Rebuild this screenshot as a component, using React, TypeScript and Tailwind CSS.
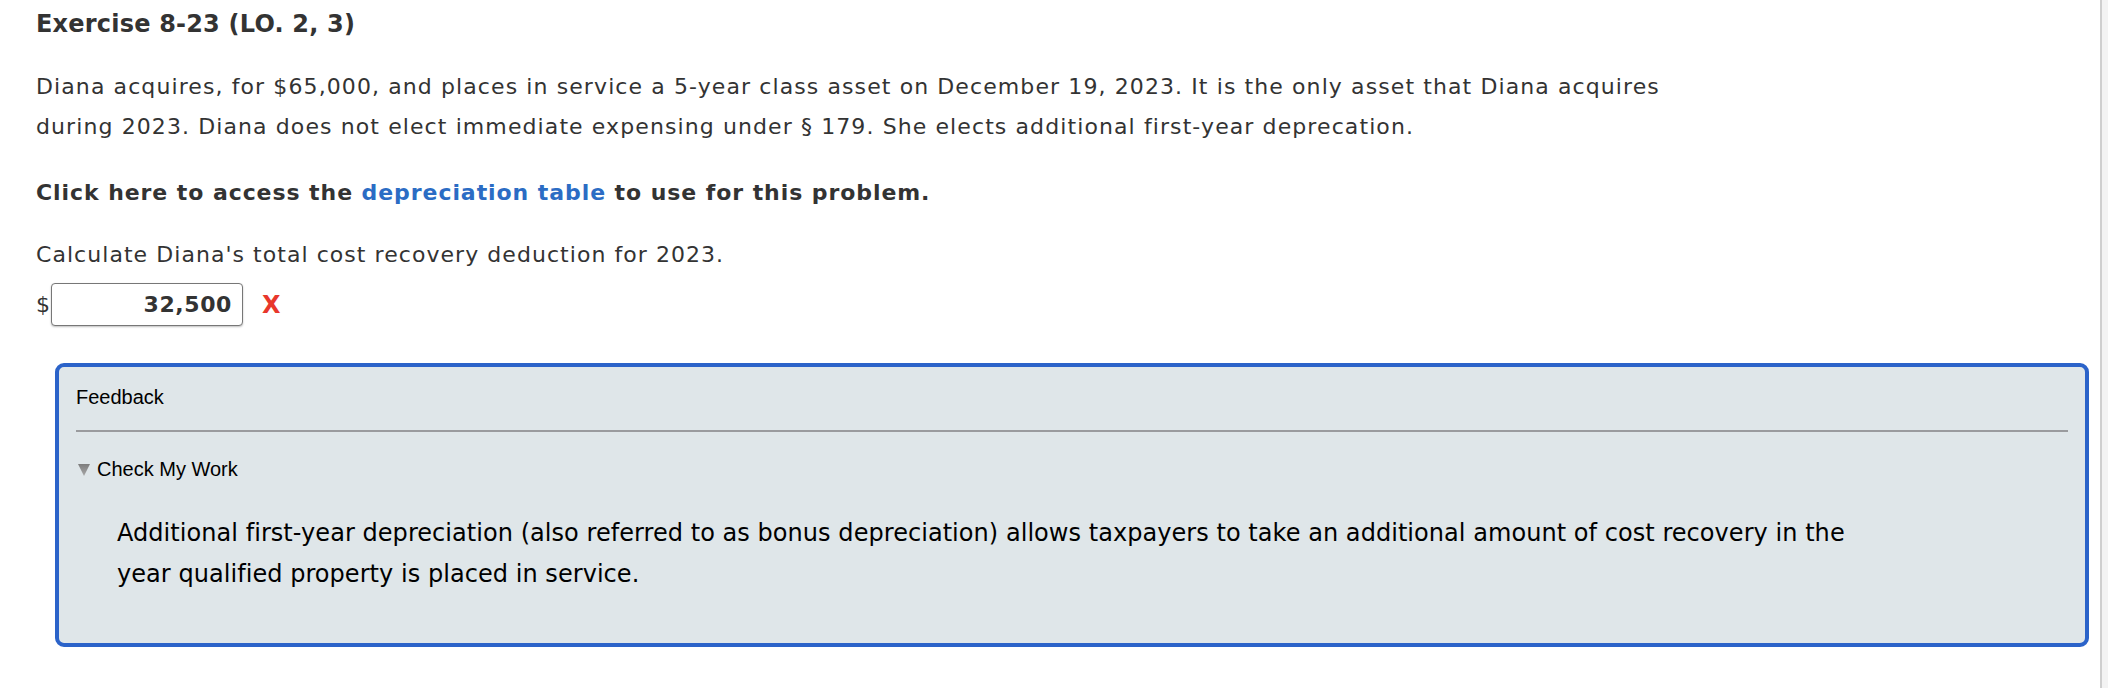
import React from "react";

const verdana = "font-['DejaVu_Sans',Verdana,sans-serif]";

export default function App() {
  return (
    <div className="flex min-h-screen w-full bg-white">
      <div className="flex-1 min-w-0 pr-[11px]">
        <div className={`${verdana} text-[#333333] pl-[36px] pt-[9px]`}>
          <h1 className="text-[24px] leading-[30px] font-bold tracking-[0.2px] whitespace-nowrap">
            Exercise 8-23 (LO. 2, 3)
          </h1>
          <p className="mt-[28px] text-[22px] leading-[40px] tracking-[1.1px] whitespace-nowrap">
            Diana acquires, for $65,000, and places in service a 5-year class asset on December 19, 2023. It is the only asset that Diana acquires
            <br />
            during 2023. Diana does not elect immediate expensing under § 179. She elects additional first-year deprecation.
          </p>
          <p className="mt-[26px] text-[22px] leading-[40px] font-bold tracking-[0.93px] whitespace-nowrap">
            Click here to access the{" "}
            <a className="text-[#2b6cc4]" href="#">
              depreciation table
            </a>{" "}
            to use for this problem.
          </p>
          <p className="mt-[22px] text-[22px] leading-[40px] tracking-[1.05px] whitespace-nowrap">
            Calculate Diana's total cost recovery deduction for 2023.
          </p>
          <div className="mt-[8px] flex items-center">
            <span className="text-[22px] leading-[43px]">$</span>
            <div className="ml-[1px] flex h-[43px] w-[192px] items-center justify-end rounded-[4px] border-[1.5px] border-[#777777] bg-white pr-[10px] shadow-[0_1px_2px_rgba(0,0,0,0.25)]">
              <span className="text-[22px] font-bold tracking-[0.6px] text-[#333333]">32,500</span>
            </div>
            <span className="ml-[19px] text-[24px] font-bold text-[#e8372c]">X</span>
          </div>
        </div>

        <div className="ml-[55px] mt-[37px] rounded-[9px] border-[4px] border-[#2b63c9] bg-[#dfe6e9] px-[17px] pt-[18px] pb-[48px] text-black">
          <div className="font-['Liberation_Sans',Arial,sans-serif] text-[20px] leading-[24px]">
            Feedback
          </div>
          <div className="mt-[21px] h-[2px] bg-[#9a9b9e]" />
          <div className="mt-[25px] flex items-center font-['Liberation_Sans',Arial,sans-serif] text-[20px] leading-[24px]">
            <svg width="12" height="12" viewBox="0 0 12 12" className="ml-[2px] mr-[7px] mt-[1px]">
              <defs>
                <linearGradient id="tri" x1="0" y1="0" x2="0" y2="1">
                  <stop offset="0" stopColor="#7d7d7d" />
                  <stop offset="1" stopColor="#a8a8a8" />
                </linearGradient>
              </defs>
              <polygon points="0,0 12,0 6,12" fill="url(#tri)" />
            </svg>
            <span>Check My Work</span>
          </div>
          <p className="mt-[32px] ml-[41px] font-['DejaVu_Sans',Tahoma,sans-serif] text-[24px] leading-[41px] tracking-[0.05px] whitespace-nowrap">
            Additional first-year depreciation (also referred to as bonus depreciation) allows taxpayers to take an additional amount of cost recovery in the
            <br />
            year qualified property is placed in service.
          </p>
        </div>
      </div>
      <div className="w-[8px] shrink-0 border-l-[2px] border-[#cfcfcf] bg-[#f3f3f3]" />
    </div>
  );
}
